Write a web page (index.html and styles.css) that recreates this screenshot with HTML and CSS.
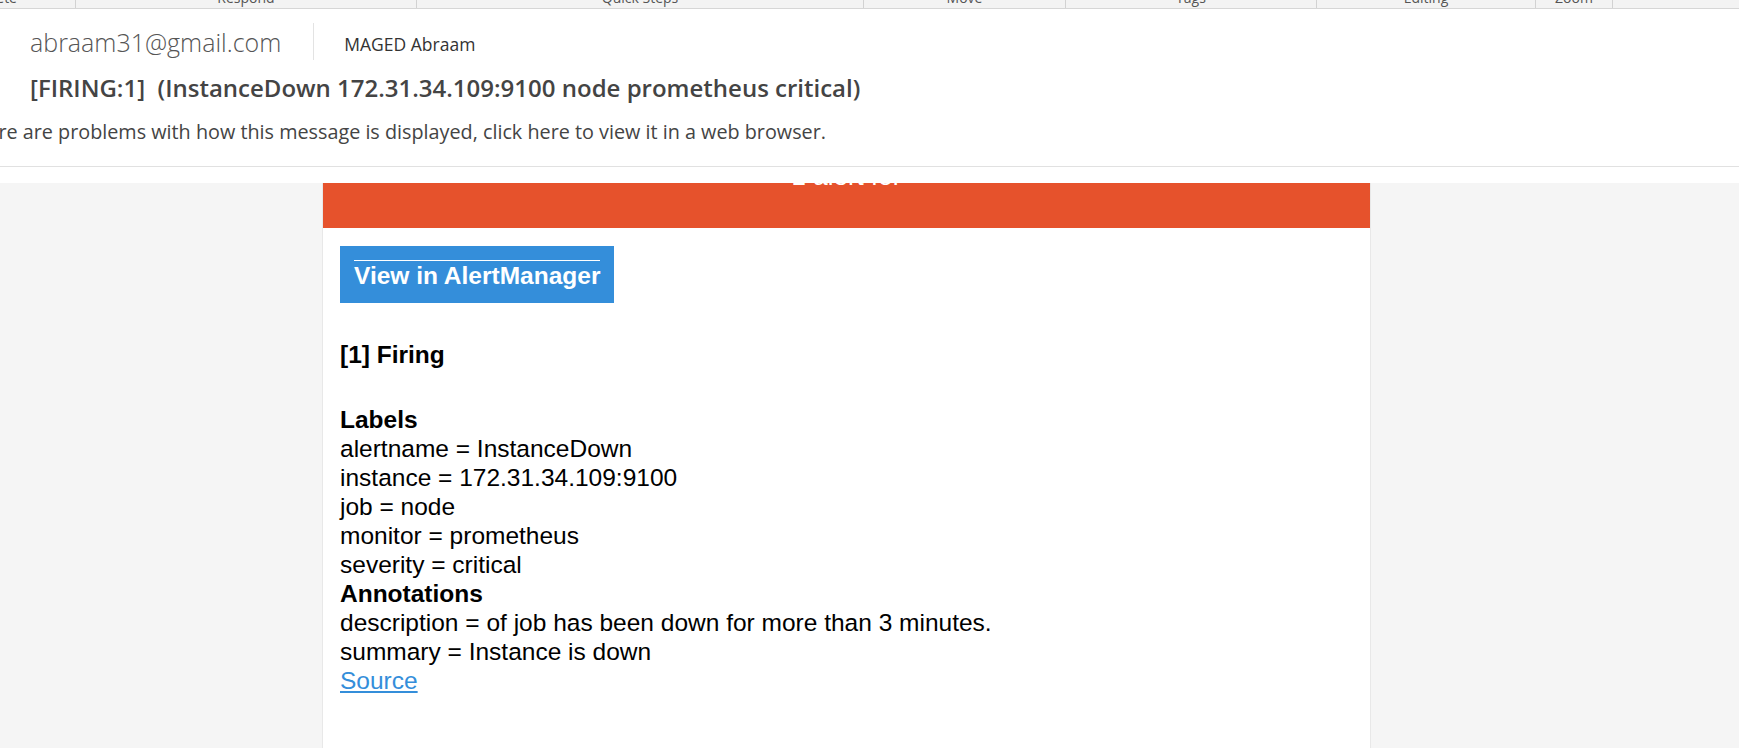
FILE: index.html
```html
<!DOCTYPE html>
<html lang="en">
<head>
<meta charset="utf-8">
<title>[FIRING:1] (InstanceDown 172.31.34.109:9100 node prometheus critical)</title>
<link rel="stylesheet" href="styles.css">
</head>
<body>
<div class="ribbon">
  <div class="group g-delete"><span class="glabel">Delete</span></div>
  <div class="group g-respond"><span class="glabel">Respond</span></div>
  <div class="group g-quick"><span class="glabel">Quick Steps</span></div>
  <div class="group g-move"><span class="glabel">Move</span></div>
  <div class="group g-tags"><span class="glabel">Tags</span></div>
  <div class="group g-editing"><span class="glabel">Editing</span></div>
  <div class="group g-zoom"><span class="glabel">Zoom</span></div>
  <div class="group g-rest"></div>
</div>

<header class="msg-head">
  <div class="sender-row">
    <div class="sender-email">abraam31@gmail.com</div>
    <div class="sender-sep"></div>
    <div class="sender-name">MAGED Abraam</div>
  </div>
  <div class="subject">[FIRING:1]&nbsp; (InstanceDown 172.31.34.109:9100 node prometheus critical)</div>
  <div class="infobar"><span>If there are problems with how this message is displayed, click here to view it in a web browser.</span></div>
</header>

<div class="gap"></div>

<main class="viewer">
  <div class="card">
    <div class="alert-head"><div class="alert-title">1 alert for</div></div>
    <div class="content">
      <a class="btn" href="#"><span class="btn-text">View in AlertManager</span></a>
      <div class="block firing"><strong>[1] Firing</strong></div>
      <div class="block labels">
        <strong>Labels</strong><br>
        alertname = InstanceDown<br>
        instance = 172.31.34.109:9100<br>
        job = node<br>
        monitor = prometheus<br>
        severity = critical<br>
        <strong>Annotations</strong><br>
        description = of job has been down for more than 3 minutes.<br>
        summary = Instance is down<br>
        <a class="source" href="#">Source</a><br>
      </div>
    </div>
  </div>
</main>
</body>
</html>
```

FILE: styles.css
```css
html, body {
  margin: 0;
  padding: 0;
  background: #ffffff;
  height: 748px;
  overflow: hidden;
}

body {
  font-family: "Open Sans", "Noto Sans", sans-serif;
  color: #444;
}

/* ribbon (clipped at top) */
.ribbon {
  display: flex;
  height: 8px;
  background: #f3f3f3;
  border-bottom: 1px solid #d6d6d6;
  overflow: hidden;
}
.group {
  display: flex;
  justify-content: center;
  border-right: 1px solid #d2d2d2;
  flex: none;
}
.g-delete { width: 75px; justify-content: flex-end; }
.g-respond { width: 340px; }
.g-quick { width: 446px; }
.g-move { width: 201px; }
.g-tags { width: 250px; }
.g-editing { width: 218px; }
.g-zoom { width: 76px; }
.g-rest { flex: 1; border-right: none; }
.glabel {
  font-size: 14px;
  line-height: 14px;
  margin-top: -9px;
  color: #555;
  white-space: nowrap;
}
.g-delete .glabel { margin-right: 58px; }

/* message header */
.msg-head {
  border-bottom: 1px solid #e1e1e1;
  padding-bottom: 22px;
}
.sender-row {
  display: flex;
  align-items: flex-start;
  margin-top: 14px;
  height: 37px;
  padding-left: 30px;
}
.sender-email {
  font-size: 25px;
  font-weight: 300;
  color: #555;
  line-height: 37px;
  margin-top: 1px;
  margin-right: 32px;
  white-space: nowrap;
}
.sender-sep {
  width: 1px;
  height: 37px;
  background: #e3e3e3;
}
.sender-name {
  font-size: 17.5px;
  color: #333;
  line-height: 37px;
  margin-top: 3px;
  margin-left: 30px;
  white-space: nowrap;
}
.subject {
  margin-top: 13px;
  height: 30px;
  line-height: 30px;
  padding-left: 30px;
  font-size: 24px;
  font-weight: 600;
  color: #444;
  white-space: nowrap;
}
.infobar {
  margin-top: 17px;
  height: 24px;
  width: 826px;
  display: flex;
  justify-content: flex-end;
  font-size: 19.8px;
  line-height: 24px;
  color: #444;
  white-space: nowrap;
}

.gap { height: 16px; }

/* email body */
.viewer {
  background: #f5f5f5;
  height: 565px;
  padding-left: 322px;
  overflow: hidden;
}
.card {
  width: 1049px;
  box-sizing: border-box;
  background: #ffffff;
  border-left: 1px solid #e8e8e8;
  border-right: 1px solid #e8e8e8;
  height: 100%;
  font-family: "Liberation Sans", Arial, sans-serif;
  color: #000;
}
.alert-head {
  height: 45px;
  background: #e6522c;
  overflow: hidden;
  text-align: center;
}
.alert-title {
  color: #fff;
  font-size: 26px;
  line-height: 26px;
  margin-top: -20px;
}
.content {
  padding: 18px 17px 0 17px;
  font-size: 24.5px;
  line-height: 29.1px;
}
.btn {
  display: inline-block;
  vertical-align: top;
  background: #348eda;
  color: #fff;
  text-decoration: none;
  padding: 14px 14px 14px 14px;
  height: 57px;
  box-sizing: border-box;
}
.btn-text {
  display: block;
  border-top: 1px solid #fff;
  font-size: 24.5px;
  font-weight: bold;
  line-height: 29px;
}
.block strong { font-weight: bold; }
.firing { margin-top: 37px; }
.labels { margin-top: 35.5px; }
.source {
  color: #348eda;
  text-decoration: underline;
}
```
